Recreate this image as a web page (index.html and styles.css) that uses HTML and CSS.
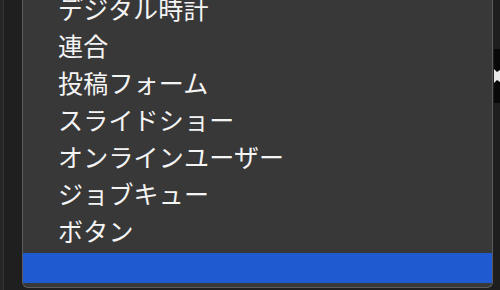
FILE: index.html
```html
<!DOCTYPE html>
<html lang="ja">
<head>
<meta charset="utf-8">
<link rel="stylesheet" href="styles.css">
</head>
<body>
<div class="screen">
  <div class="left"><div class="left-inner"></div></div>
  <div class="menu">
    <ul class="items">
      <li class="item">デジタル時計</li>
      <li class="item">連合</li>
      <li class="item">投稿フォーム</li>
      <li class="item">スライドショー</li>
      <li class="item">オンラインユーザー</li>
      <li class="item">ジョブキュー</li>
      <li class="item">ボタン</li>
      <li class="item item-selected"></li>
    </ul>
  </div>
  <div class="right">
    <div class="handle">
      <svg class="handle-icon" width="6" height="14" viewBox="0 0 6 14">
        <path d="M0 0 L3 3 L6 1 L6 13 L3 11 L0 14 Z" fill="#e8e8e8"/>
      </svg>
    </div>
  </div>
</div>
</body>
</html>
```

FILE: styles.css
```css
html, body {
  margin: 0;
  padding: 0;
}
body {
  width: 500px;
  height: 290px;
  overflow: hidden;
  background: #1e1e1e;
  font-family: "Noto Sans CJK JP", "Noto Sans", sans-serif;
}
.screen {
  display: flex;
  height: 290px;
  align-items: flex-start;
}
.left {
  width: 22px;
  height: 290px;
  background: #262626;
  padding-left: 3px;
  box-sizing: border-box;
}
.left-inner {
  height: 100%;
  border-left: 1px solid #363636;
  background: #1f1f1f;
}
.menu {
  width: 471px;
  box-sizing: border-box;
  margin-top: -9px;
  background: #383838;
  border: 1px solid #5c5c5c;
  border-top: none;
  border-radius: 0 0 6px 6px;
  padding-bottom: 4px;
}
.items {
  list-style: none;
  margin: 0;
  padding: 0;
}
.item {
  height: 37px;
  line-height: 35px;
  padding-left: 35px;
  font-size: 25px;
  letter-spacing: 0.2px;
  color: #f4f4f4;
  white-space: nowrap;
}
.item-selected {
  height: 30px;
  margin-top: 3px;
  background: #1f5ad0;
}
.right {
  flex: 1;
  height: 290px;
  background: #1e1e1e;
  padding-top: 49px;
  box-sizing: border-box;
  padding-left: 1px;
}
.handle {
  height: 54px;
  background: #080808;
  display: flex;
  align-items: center;
}
.handle-icon {
  display: block;
}
```
